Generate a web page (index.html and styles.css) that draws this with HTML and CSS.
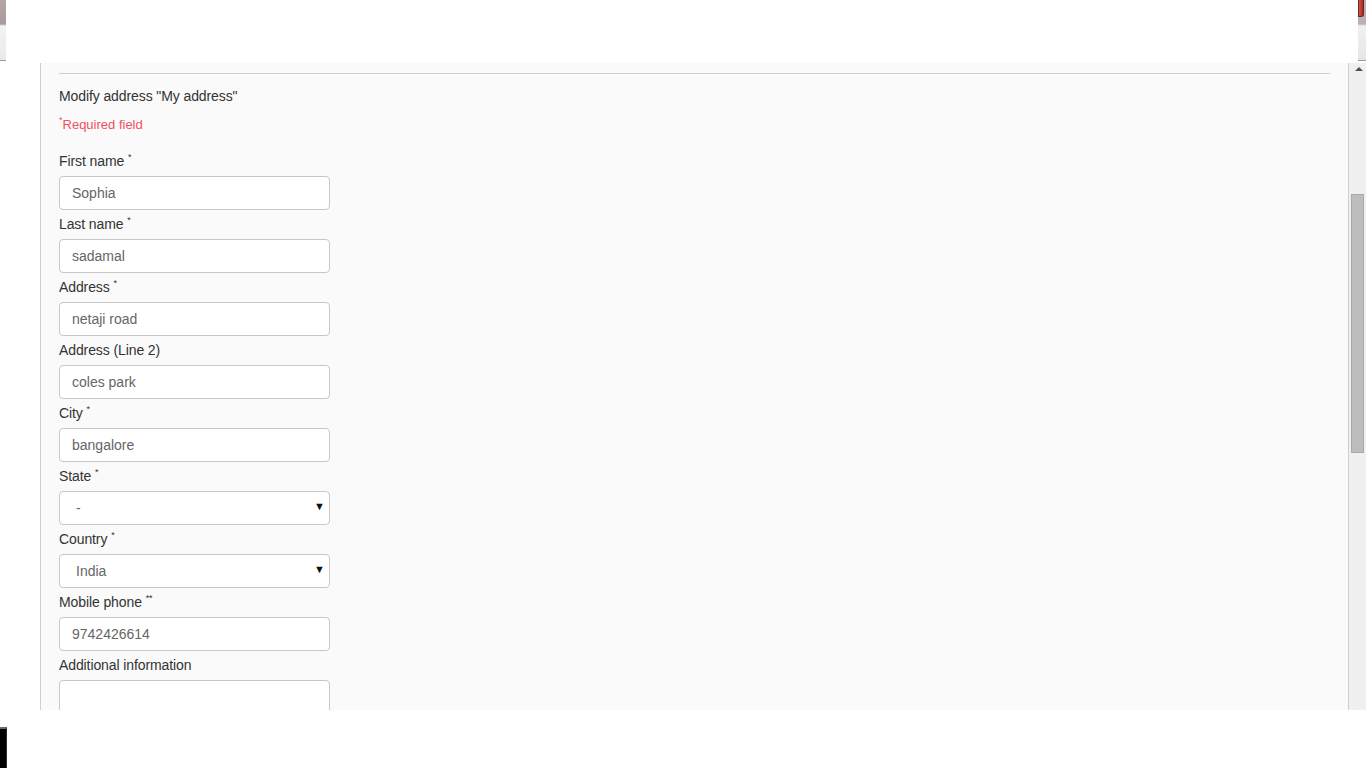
FILE: index.html
```html
<!DOCTYPE html>
<html lang="en">
<head>
	<meta charset="UTF-8">
	<title>Modify address</title>
	<link rel="stylesheet" href="styles.css">
</head>
<body>
	<div class="topbar">
		<div class="stub stub-left"></div>
		<div class="top-white"></div>
		<div class="stub stub-right"><span class="closebtn"></span></div>
	</div>
	<div class="main">
		<div class="gutter"></div>
		<div class="panel">
			<hr class="rule">
			<h3 class="title">Modify address "My address"</h3>
			<p class="required"><sup>*</sup>Required field</p>
			<form class="addr">
				<label>First name <sup>*</sup></label>
				<input type="text" value="Sophia">
				<label>Last name <sup>*</sup></label>
				<input type="text" value="sadamal">
				<label>Address <sup>*</sup></label>
				<input type="text" value="netaji road">
				<label>Address (Line 2)</label>
				<input type="text" value="coles park">
				<label>City <sup>*</sup></label>
				<input type="text" value="bangalore">
				<label>State <sup>*</sup></label>
				<div class="selectbox">
					<select><option>-</option></select>
					<span class="caret">&#9660;</span>
				</div>
				<label>Country <sup>*</sup></label>
				<div class="selectbox">
					<select><option>India</option></select>
					<span class="caret">&#9660;</span>
				</div>
				<label>Mobile phone <sup>**</sup></label>
				<input type="text" value="9742426614">
				<label>Additional information</label>
				<textarea></textarea>
			</form>
		</div>
		<div class="scrollbar">
			<div class="arrow"></div>
			<div class="thumb"></div>
		</div>
	</div>
	<div class="bottom">
		<div class="corner"></div>
	</div>
</body>
</html>
```

FILE: styles.css
```css
*{
	margin: 0;
	padding: 0;
	box-sizing: border-box;
}
body{
	width: 1366px;
	height: 768px;
	overflow: hidden;
	background: #fff;
	font-family: "Liberation Sans", Arial, sans-serif;
	font-size: 14px;
	color: #333;
}
.topbar{
	display: flex;
	height: 63px;
}
.stub{
	height: 61px;
	border-bottom: 1px solid #9a9a9a;
	background: linear-gradient(#ececec, #f6f6f6);
}
.stub-left{
	width: 6px;
	background: linear-gradient(#b7a6a6 0, #a89a9b 24px, #f3f3f3 26px, #e9e9e9 100%);
}
.top-white{
	flex: 1;
}
.stub-right{
	width: 8px;
	position: relative;
	background: linear-gradient(#bcb0b0 0, #bcb0b0 24px, #f0f0f0 26px, #e6e6e6 100%);
}
.closebtn{
	position: absolute;
	left: 0;
	top: 0;
	width: 6px;
	height: 17px;
	background: linear-gradient(90deg, #d9563f, #a8261e);
	border: 1px solid #5c2a28;
	border-top: 0;
	border-radius: 0 0 3px 0;
}
.main{
	display: flex;
	height: 647px;
}
.gutter{
	width: 40px;
}
.panel{
	flex: 1;
	background: #fafafa;
	border-left: 1px solid #cfcfcf;
	border-right: 1px solid #cfcfcf;
	padding: 10px 18px 0 18px;
	overflow: hidden;
}
.rule{
	border: 0;
	border-top: 1px solid #d0d0d0;
	margin-bottom: 12px;
}
.title{
	font-size: 14px;
	font-weight: normal;
	line-height: 20px;
	letter-spacing: -0.1px;
	color: #333;
}
.required{
	margin-top: 9px;
	line-height: 20px;
	font-size: 13px;
	color: #f0505f;
}
sup{
	font-size: 9px;
	line-height: 0;
	vertical-align: baseline;
	position: relative;
	top: -6px;
}
.addr{
	display: flex;
	flex-direction: column;
	align-items: flex-start;
	margin-top: 16px;
}
.addr label{
	line-height: 20px;
	margin-bottom: 5px;
	letter-spacing: -0.1px;
	color: #333;
}
.addr input,
.addr textarea,
.addr select{
	width: 271px;
	height: 34px;
	border: 1px solid #c8c8c8;
	border-radius: 4px;
	background: #fff;
	font-family: "Liberation Sans", Arial, sans-serif;
	font-size: 14px;
	color: #666;
	padding: 0 12px;
	margin-bottom: 4px;
	outline: none;
}
.addr textarea{
	height: 60px;
	resize: none;
}
.selectbox{
	position: relative;
}
.addr select{
	appearance: none;
	-webkit-appearance: none;
	padding-left: 16px;
	display: block;
}
.caret{
	position: absolute;
	right: 5px;
	top: 9px;
	font-size: 11px;
	color: #111;
	pointer-events: none;
}
.scrollbar{
	width: 17px;
	background: #f0f0f0;
	padding-top: 4px;
	padding-left: 2px;
}
.arrow{
	width: 0;
	height: 0;
	margin-left: 4px;
	border-left: 4px solid transparent;
	border-right: 4px solid transparent;
	border-bottom: 4px solid #505050;
}
.thumb{
	width: 13px;
	height: 259px;
	margin-top: 123px;
	background: #bdbdbd;
	border: 1px solid #a8a8a8;
}
.bottom{
	height: 58px;
	padding-top: 17px;
}
.corner{
	width: 7px;
	height: 41px;
	background: #000;
	border-top: 2px solid #6a6a70;
	border-right: 1px solid #2a2a2a;
}
```
